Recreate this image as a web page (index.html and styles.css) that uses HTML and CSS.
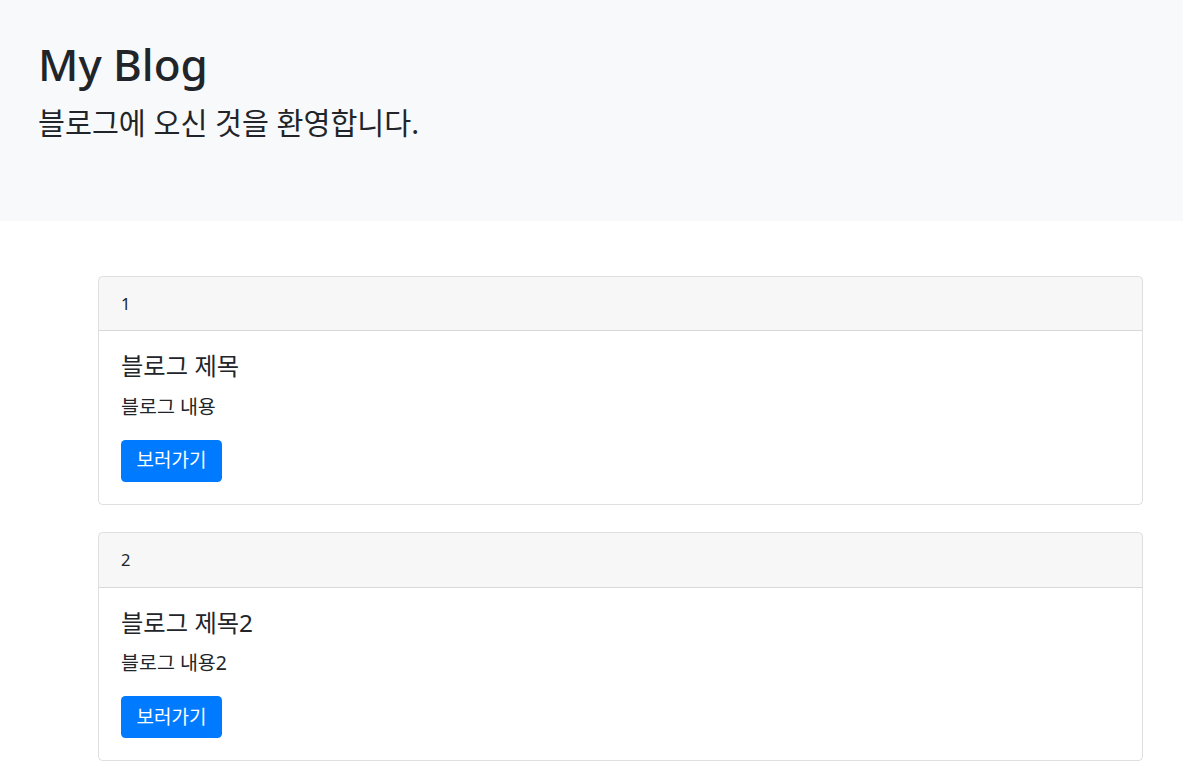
FILE: index.html
```html
<!DOCTYPE html>
<html lang="ko">
<head>
    <meta charset="UTF-8">
    <meta name="viewport" content="width=device-width, initial-scale=1.0">
    <title>My Blog</title>
    <link rel="stylesheet" href="styles.css">
</head>
<body>
    <!-- 상단 소개 -->
    <div class="jumbotron">
        <h1>My Blog</h1>
        <p class="lead">블로그에 오신 것을 환영합니다.</p>
    </div>

    <!-- 글 목록 -->
    <div class="posts">
        <div class="card">
            <div class="card-header">1</div>
            <div class="card-body">
                <h5 class="card-title">블로그 제목</h5>
                <p class="card-text">블로그 내용</p>
                <a href="#" class="btn">보러가기</a>
            </div>
        </div>

        <div class="card">
            <div class="card-header">2</div>
            <div class="card-body">
                <h5 class="card-title">블로그 제목2</h5>
                <p class="card-text">블로그 내용2</p>
                <a href="#" class="btn">보러가기</a>
            </div>
        </div>
    </div>
</body>
</html>
```
FILE: styles.css
```css
body {
    margin: 0;
    font-family: "Noto Sans", "Noto Sans CJK KR", sans-serif;
    font-size: 17.6px;
    line-height: 1.5;
    color: #212529;
    background: #fff;
}
.jumbotron {
    background-color: #f8f9fa;
    height: 221px;
    box-sizing: border-box;
    padding: 38px 38px;
}
.jumbotron h1 {
    margin: 0 0 15px;
    font-size: 44px;
    font-weight: 500;
    line-height: 1.2;
}
.lead {
    margin: 0;
    font-size: 29.3px;
    font-weight: 400;
    line-height: 1.2;
}
.posts {
    padding: 55px 40px 20px 98px;
}
.card {
    border: 1px solid rgba(0, 0, 0, 0.125);
    border-radius: 4.4px;
    margin-bottom: 27px;
    overflow: hidden;
}
.card-header {
    background-color: rgba(0, 0, 0, 0.03);
    border-bottom: 1px solid rgba(0, 0, 0, 0.125);
    padding: 13.2px 22px;
    font-size: 16.5px;
    line-height: 27px;
}
.card-body {
    padding: 22px;
}
.card-title {
    margin: 0 0 13px;
    font-size: 24.3px;
    font-weight: 400;
    line-height: 26.4px;
}
.card-text {
    margin: 0 0 20px;
    font-size: 19.5px;
    line-height: 27px;
}
.btn {
    display: inline-block;
    background-color: #007bff;
    color: #fff;
    text-decoration: none;
    font-size: 19px;
    line-height: 29.2px;
    padding: 6.6px 15.5px;
    border-radius: 4.4px;
}
```
